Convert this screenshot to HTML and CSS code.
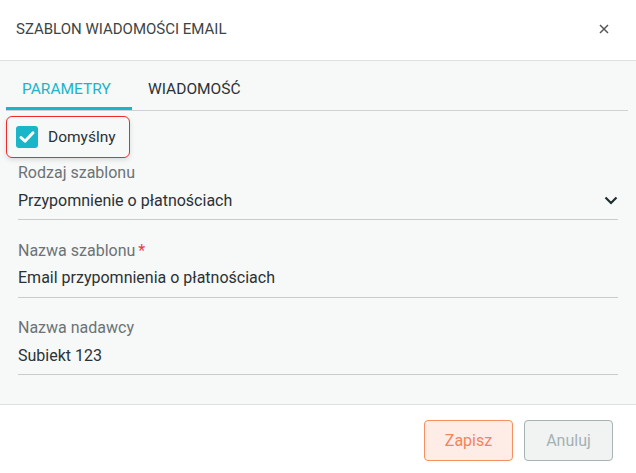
FILE: index.html
```html
<!DOCTYPE html>
<html lang="pl">
<head>
<meta charset="utf-8">
<link rel="stylesheet" href="styles.css">
</head>
<body>
<div class="dialog">
  <header class="head">
    <h1 class="title">Szablon wiadomości email</h1>
    <svg class="close" width="10" height="10" viewBox="0 0 10 10"><path d="M1 1L9 9M9 1L1 9" stroke="#555" stroke-width="1.5"/></svg>
  </header>
  <main class="body">
    <nav class="tabs">
      <div class="tab active">Parametry</div>
      <div class="tab">Wiadomość</div>
    </nav>
    <div class="check-wrap">
      <label class="check">
        <span class="box"><svg width="18" height="18" viewBox="0 0 18 18"><path d="M3 9.5L7 13.2L15 4.8" fill="none" stroke="#fff" stroke-width="3" stroke-linecap="round" stroke-linejoin="round"/></svg></span>
        <span class="check-label">Domyślny</span>
      </label>
    </div>
    <div class="field first">
      <div class="label">Rodzaj szablonu</div>
      <div class="value select"><span>Przypomnienie o płatnościach</span>
        <svg width="14" height="9" viewBox="0 0 14 9"><path d="M1.5 1.5L7 7L12.5 1.5" fill="none" stroke="#1f2d30" stroke-width="2.2"/></svg>
      </div>
    </div>
    <div class="field">
      <div class="label">Nazwa szablonu<span class="req">*</span></div>
      <div class="value">Email przypomnienia o płatnościach</div>
    </div>
    <div class="field">
      <div class="label">Nazwa nadawcy</div>
      <div class="value">Subiekt 123</div>
    </div>
  </main>
  <footer class="foot">
    <button class="btn save">Zapisz</button>
    <button class="btn cancel">Anuluj</button>
  </footer>
</div>
</body>
</html>
```
FILE: styles.css
```css
* { box-sizing: border-box; }
html, body { margin: 0; padding: 0; }
body {
  width: 636px;
  height: 473px;
  font-family: Roboto, "Liberation Sans", sans-serif;
  background: #fff;
  overflow: hidden;
}
.dialog { display: flex; flex-direction: column; height: 473px; }
.head {
  height: 61px;
  display: flex;
  align-items: center;
  justify-content: space-between;
  padding: 0 27px 0 16px;
  border-bottom: 1px solid #dfe1e1;
}
.title {
  margin: 0;
  font-size: 15px;
  font-weight: 400;
  text-transform: uppercase;
  color: #3c4446;
  padding-bottom: 3px;
}
.close { margin-top: -2px; }
.body {
  height: 344px;
  background: #f7f8f8;
  border-bottom: 1px solid #dfe1e1;
  padding: 0 18px 0 6px;
}
.tabs {
  display: flex;
  border-bottom: 1px solid #cfd2d2;
  margin-right: -10px;
  height: 50px;
  padding-top: 17px;
}
.tab {
  font-size: 15.5px;
  text-transform: uppercase;
  color: #2a3235;
  padding: 0 16px;
  height: 32px;
  line-height: 22px;
}
.tab.active {
  color: #19b5c8;
  border-bottom: 3px solid #19b5c8;
  width: 126px;
}
.check-wrap { padding-top: 5px; }
.check {
  display: inline-flex;
  align-items: center;
  width: 124px;
  height: 42px;
  border: 1.5px solid #ee2a2a;
  border-radius: 6px;
  box-shadow: 0 2px 5px rgba(0,0,0,0.12);
  padding-left: 9px;
}
.box {
  width: 22px;
  height: 22px;
  border-radius: 3px;
  background: #19b5c8;
  display: flex;
  align-items: center;
  justify-content: center;
}
.check-label {
  margin-left: 10px;
  font-size: 15.5px;
  color: #2a3235;
}
.field {
  margin-left: 12px;
  padding-top: 21.5px;
}
.field.first { padding-top: 6px; }
.label {
  font-size: 16px;
  color: #6b7375;
  height: 18px;
  line-height: 18px;
}
.req { color: #ef3a4c; margin-left: 3px; }
.value {
  font-size: 16px;
  color: #2a3235;
  height: 38px;
  line-height: 36px;
  border-bottom: 1px solid #c9cccc;
  display: flex;
  justify-content: space-between;
  align-items: center;
}
.foot {
  flex: 1;
  display: flex;
  justify-content: flex-end;
  align-items: flex-start;
  gap: 11px;
  padding: 15px 23px 0 0;
}
.btn {
  width: 89px;
  height: 41px;
  border-radius: 4px;
  font-family: inherit;
  font-size: 16px;
  cursor: pointer;
}
.save {
  background: #feece6;
  border: 1px solid #f6905f;
  color: #f4845a;
}
.cancel {
  background: #f1f2f2;
  border: 1px solid #a6b3b5;
  color: #a4b2b4;
}
```
